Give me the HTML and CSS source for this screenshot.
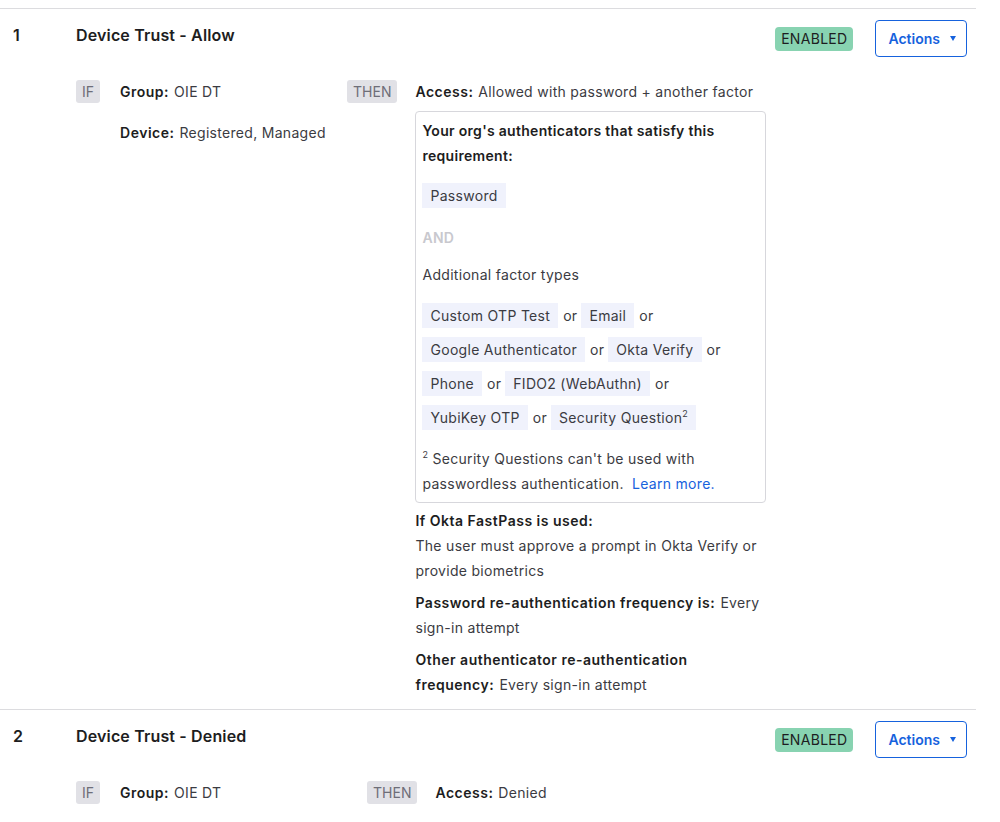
FILE: index.html
```html
<!DOCTYPE html>
<html lang="en">
<head>
  <meta charset="UTF-8" />
  <title>Authentication policy rules</title>
  <link rel="stylesheet" href="styles.css">
</head>
<body>
  <div class="policy-list">

    <!-- Rule 1 -->
    <div class="rule">
      <div class="rule-head">
        <div class="rule-priority">1</div>
        <div class="rule-name">Device Trust - Allow</div>
        <span class="status-badge">ENABLED</span>
        <button class="actions-btn">Actions <span class="caret"></span></button>
      </div>

      <div class="rule-body">
        <span class="tag tag-if">IF</span>
        <div class="conditions">
          <div class="condition"><span class="field-label">Group:</span><span class="field-value">OIE DT</span></div>
          <div class="condition"><span class="field-label">Device:</span><span class="field-value">Registered, Managed</span></div>
        </div>

        <span class="tag tag-then">THEN</span>
        <div class="then-content">
          <div><span class="field-label">Access:</span><span class="field-value">Allowed with password + another factor</span></div>

          <div class="auth-box">
            <div class="box-title">Your org's authenticators that satisfy this requirement:</div>
            <div class="required-factor"><span class="chip">Password</span></div>
            <div class="and-label">AND</div>
            <div class="factor-title">Additional factor types</div>
            <div class="factor-list">
              <span class="factor"><span class="chip">Custom OTP Test</span><span class="factor-or">or</span></span>
              <span class="factor"><span class="chip">Email</span><span class="factor-or">or</span></span>
              <span class="factor"><span class="chip">Google Authenticator</span><span class="factor-or">or</span></span>
              <span class="factor"><span class="chip">Okta Verify</span><span class="factor-or">or</span></span>
              <span class="factor"><span class="chip">Phone</span><span class="factor-or">or</span></span>
              <span class="factor"><span class="chip">FIDO2 (WebAuthn)</span><span class="factor-or">or</span></span>
              <span class="factor"><span class="chip">YubiKey OTP</span><span class="factor-or">or</span></span>
              <span class="factor"><span class="chip">Security Question<sup>2</sup></span></span>
            </div>
            <div class="footnote"><sup>2</sup> Security Questions can't be used with passwordless authentication. <a class="learn-more" href="#">Learn more.</a></div>
          </div>

          <div class="fastpass">
            <div class="field-label">If Okta FastPass is used:</div>
            <div class="field-value">The user must approve a prompt in Okta Verify or provide biometrics</div>
          </div>
          <div class="reauth"><span class="field-label">Password re-authentication frequency is:</span> <span class="field-value">Every sign-in attempt</span></div>
          <div class="reauth"><span class="field-label">Other authenticator re-authentication frequency:</span> <span class="field-value">Every sign-in attempt</span></div>
        </div>
      </div>
    </div>

    <!-- Rule 2 -->
    <div class="rule rule-denied">
      <div class="rule-head">
        <div class="rule-priority">2</div>
        <div class="rule-name">Device Trust - Denied</div>
        <span class="status-badge">ENABLED</span>
        <button class="actions-btn">Actions <span class="caret"></span></button>
      </div>

      <div class="rule-body">
        <span class="tag tag-if">IF</span>
        <div class="conditions">
          <div class="condition"><span class="field-label">Group:</span><span class="field-value">OIE DT</span></div>
        </div>

        <span class="tag tag-then">THEN</span>
        <div class="then-content">
          <div><span class="field-label">Access:</span><span class="field-value">Denied</span></div>
        </div>
      </div>
    </div>

  </div>
</body>
</html>
```

FILE: styles.css
```css
* {
  box-sizing: border-box;
}

body {
  margin: 0;
  background: #fff;
  font-family: Inter, "Noto Sans", sans-serif;
  font-size: 14px;
  line-height: 25px;
  letter-spacing: 0.3px;
  color: #1d1d21;
}

.policy-list {
  width: 976px;
  padding-top: 8px;
}

.rule {
  border-top: 1px solid #dcdcdf;
  padding-bottom: 12px;
}

/* header line: priority, name, status, actions */
.rule-head {
  display: flex;
  align-items: flex-start;
  padding: 11px 9px 0 13px;
}

.rule-priority,
.rule-name {
  margin-top: 3px;
  font-size: 16px;
  font-weight: 600;
  line-height: 24px;
  letter-spacing: 0.15px;
}

.rule-priority {
  width: 63px;
}

.rule-name {
  flex: 1;
}

.status-badge {
  margin: 7px 22px 0 0;
  height: 24px;
  padding: 0 6px;
  line-height: 24px;
  border-radius: 4px;
  background-color: #88d3b1;
  color: #1d1d21;
}

.actions-btn {
  display: flex;
  align-items: center;
  gap: 10px;
  height: 37px;
  padding: 0 10px 0 12px;
  border: 1px solid #1662dd;
  border-radius: 4px;
  background: #fff;
  color: #1662dd;
  font-family: inherit;
  font-size: 14px;
  font-weight: 600;
  letter-spacing: 0;
  cursor: pointer;
}

.caret {
  width: 0;
  height: 0;
  border-left: 3px solid transparent;
  border-right: 3px solid transparent;
  border-top: 5px solid #1662dd;
}

/* IF / THEN body */
.rule-body {
  display: flex;
  align-items: flex-start;
  margin-top: 22px;
  padding-left: 76px;
}

.tag {
  margin-top: 1px;
  height: 23px;
  padding: 0 6px;
  line-height: 23px;
  letter-spacing: 0;
  border-radius: 3px;
  background-color: #e1e1e6;
  color: #6e6e78;
}

.tag-if {
  margin-right: 20px;
}

.tag-then {
  margin-right: 18px;
}

.conditions {
  width: 227px;
}

.rule-denied .conditions {
  width: 247px;
}

.condition + .condition {
  margin-top: 16px;
}

.field-label {
  font-weight: 600;
  letter-spacing: 0.5px;
  color: #1d1d21;
  margin-right: 5px;
}

.reauth .field-label {
  margin-right: 1px;
}

.field-value {
  color: #3b3b42;
}

.then-content {
  width: 351px;
}

/* authenticator box */
.auth-box {
  margin-top: 7px;
  padding: 6px;
  border: 1px solid #d7d7dc;
  border-radius: 4px;
  color: #3b3b42;
}

.box-title {
  font-weight: 600;
  color: #1d1d21;
}

.required-factor {
  margin-top: 15px;
}

.chip {
  display: inline-block;
  height: 25px;
  padding: 0 8px;
  line-height: 25px;
  background-color: #f0f2fc;
  color: #3b3b42;
}

sup {
  font-size: 9px;
  line-height: 0;
  vertical-align: 6px;
}

.and-label {
  margin-top: 17px;
  font-weight: 600;
  color: #c8c8ce;
}

.factor-title {
  margin-top: 12px;
}

.factor-list {
  display: flex;
  flex-wrap: wrap;
  row-gap: 9px;
  column-gap: 4px;
  margin-top: 16px;
}

.factor {
  display: flex;
  align-items: center;
  white-space: nowrap;
}

.factor-or {
  margin-left: 5px;
}

.footnote {
  margin-top: 16px;
}

.learn-more {
  margin-left: 4px;
  color: #1662dd;
  text-decoration: none;
}

.fastpass {
  margin-top: 5px;
}

.reauth {
  margin-top: 7px;
}
```
